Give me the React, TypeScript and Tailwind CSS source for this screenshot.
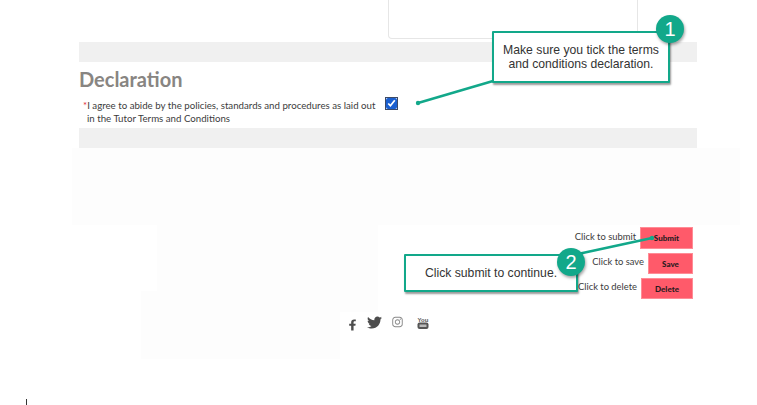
import React from 'react';
import { FaFacebookF, FaInstagram, FaTwitter } from 'react-icons/fa';

const actions = [
  { hint: 'Click to submit', label: 'Submit', button: 'w-[53px] h-[22px]' },
  { hint: 'Click to save', label: 'Save', button: 'w-[45px] h-[21px]' },
  { hint: 'Click to delete', label: 'Delete', button: 'w-[52px] h-[21px]' },
];

const Badge = ({ n, className }: { n: number; className: string }) => (
  <div
    className={`absolute w-[28px] h-[28px] rounded-full bg-[#12a88a] text-white text-[20px] flex items-center justify-center shadow-[1px_2px_3px_rgba(0,0,0,0.35)] font-['Liberation_Sans',sans-serif] ${className}`}
  >
    {n}
  </div>
);

const Callout = ({ className, children }: { className: string; children: React.ReactNode }) => (
  <div
    className={`absolute bg-white border-2 border-[#12a88a] rounded-[1px] shadow-[1px_2px_2px_rgba(0,0,0,0.4)] flex items-center justify-center text-center text-[#333] text-[12.2px] leading-[14px] font-['Liberation_Sans',sans-serif] ${className}`}
  >
    {children}
  </div>
);

// the old stacked logo, small enough that the lettering is only a smudge
const YoutubeMark = () => (
  <svg width="12" height="13" viewBox="0 0 12 13" className="ml-[14px] -mt-[1px] text-[#555]">
    <text x="6" y="5.5" textAnchor="middle" fontSize="6" fontWeight="700" fontFamily="Liberation Sans" fill="currentColor">
      You
    </text>
    <rect x="0.5" y="6.5" width="11" height="6.5" rx="2" fill="currentColor" />
    <rect x="2.5" y="8.5" width="7" height="2.5" fill="#bbb" />
  </svg>
);

export default function App() {
  return (
    <div className="relative w-[757px] h-[405px] overflow-hidden bg-white font-['Lato',sans-serif]">
      {/* faint painted-out patches */}
      <div className="absolute left-[157px] top-[225px] w-[221px] h-[87px] bg-[#fdfdfd]" />
      <div className="absolute left-[141px] top-[291px] w-[199px] h-[68px] bg-[#fdfdfd]" />

      <div className="ml-[79px] w-[618px]">
        <div className="ml-[309px] w-[250px] h-[39px] bg-white border-r border-b border-l border-[#e6e6e6] rounded-b-sm" />
        <div className="mt-[3px] h-[20px] bg-[#f0f0f0]" />
        <h2 className="mt-[6px] h-[25px] text-[20px] leading-[23px] font-bold text-[#888582]">Declaration</h2>
        <div className="mt-[5px] flex h-[30px]">
          <p className="ml-[4px] w-[303px] text-[9.7px] leading-[13px] pt-[1px] text-[#3c3c3c]">
            <span className="text-[#e0303c]">*</span>I agree to abide by the policies, standards and procedures as laid out
            <br />
            <span className="ml-[4px]">in the Tutor Terms and Conditions</span>
          </p>
          <input
            type="checkbox"
            defaultChecked
            readOnly
            className="w-[11px] h-[11px] accent-[#1a5fd0] outline outline-1 outline-[#3d4a66] rounded-[2px]"
          />
        </div>
        <div className="h-[20px] bg-[#f0f0f0]" />
      </div>

      <div className="relative ml-[72px] w-[668px] h-[77px] bg-[#fdfdfd]" />

      <div className="relative ml-[79px] w-[614px] mt-[2px] flex flex-col gap-[4px]">
        {actions.map((a) => (
          <div key={a.label} className="flex items-center justify-end gap-1">
            <span className="text-[9.4px] text-[#3c3c3c] -mt-[2px]">{a.hint}</span>
            <button className={`${a.button} bg-[#ff5a6a] border border-[#ff8c96] text-[8px] font-black text-[#2a1a1e] flex items-center justify-center`}>
              {a.label}
            </button>
          </div>
        ))}
      </div>

      <div className="relative mt-[17px] ml-[349px] h-[14px] flex items-center text-[#4d4d4d]">
        <FaFacebookF className="w-[7px] h-[12px] mt-[3px] scale-x-110" />
        <FaTwitter className="ml-[11px] w-[15px] h-[15px] -mt-[2px]" />
        <FaInstagram className="ml-[10px] w-[11px] h-[12px] -mt-[2px] text-[#888]" />
        <YoutubeMark />
      </div>

      <div className="absolute left-[26px] top-[399px] w-[1px] h-[6px] bg-[#333]" />

      <svg className="absolute inset-0 pointer-events-none" width="757" height="405">
        <line x1="493" y1="81" x2="418" y2="103" stroke="#12a88a" strokeWidth="2.5" />
        <circle cx="418" cy="103" r="2.2" fill="#12a88a" />
        <line x1="578" y1="254" x2="652" y2="238" stroke="#12a88a" strokeWidth="2.5" />
        <circle cx="652" cy="238" r="2.2" fill="#12a88a" />
      </svg>

      <Callout className="left-[492px] top-[31px] w-[178px] h-[52px]">
        Make sure you tick the terms
        <br />
        and conditions declaration.
      </Callout>
      <Badge n={1} className="left-[656px] top-[15px]" />

      <Callout className="left-[404px] top-[254px] w-[174px] h-[38px]">Click submit to continue.</Callout>
      <Badge n={2} className="left-[557px] top-[248px]" />
    </div>
  );
}
